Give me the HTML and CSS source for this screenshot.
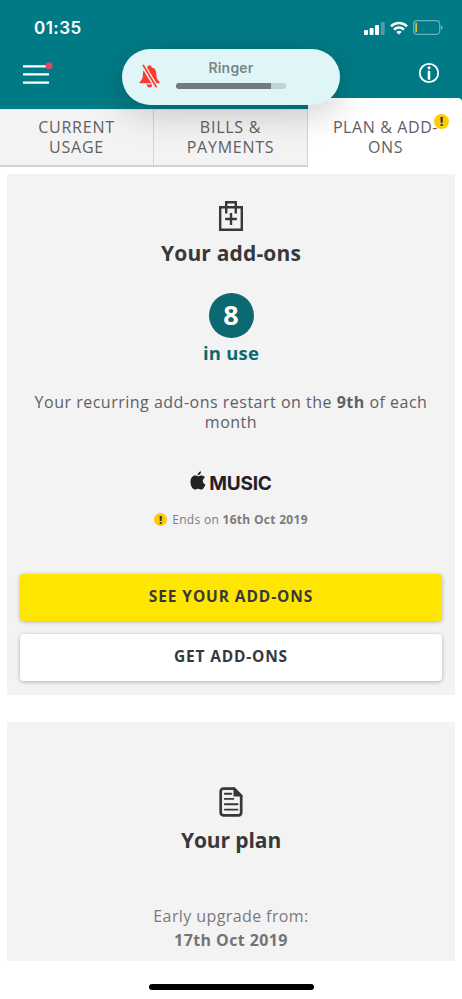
FILE: index.html
```html
<!DOCTYPE html>
<html lang="en">
<head>
<meta charset="utf-8">
<meta name="viewport" content="width=device-width">
<title>Plan &amp; add-ons</title>
<link rel="stylesheet" href="styles.css">
</head>
<body>
<header class="header">
  <div class="status">
    <span class="clock">01:35</span>
    <div class="status-icons">
      <svg width="21" height="14" viewBox="0 0 21 14" fill="#fff"><rect y="9" width="4" height="5" rx="1"/><rect x="5.6" y="7" width="4" height="7" rx="1"/><rect x="11" y="4" width="4" height="10" rx="1"/><rect x="16.7" y="1" width="4" height="13" rx="1" opacity=".28"/></svg>
      <svg width="18" height="14" viewBox="0 0 18 14" fill="none" stroke="#fff" stroke-width="2.5"><path d="M1 5.3a11.5 11.5 0 0 1 16 0M4 8.6a7.2 7.2 0 0 1 10 0"/><path d="M9 13.6 6.3 11a4 4 0 0 1 5.4 0z" fill="#fff" stroke="none"/></svg>
      <svg width="30" height="15" viewBox="0 0 30 15"><rect x=".7" y=".7" width="26" height="13.6" rx="3.5" fill="none" stroke="#fff" stroke-opacity=".42" stroke-width="1.2"/><rect x="2.3" y="3" width="1.8" height="9" rx=".7" fill="#e5c02e"/><path d="M28 5.2q3.2 2.3 0 4.6z" fill="#fff" opacity=".5"/></svg>
    </div>
  </div>
  <div class="nav">
    <svg width="30" height="24" viewBox="0 0 30 24"><path d="M0 5.3h26M0 13.3h26M0 21.7h26" stroke="#fff" stroke-width="2.3"/><circle cx="26" cy="4.7" r="3.5" fill="#db4861"/></svg>
    <svg width="22" height="22" viewBox="0 0 22 22"><circle cx="11" cy="11" r="9.2" fill="none" stroke="#fff" stroke-width="1.8"/><circle cx="11" cy="5.8" r="1.5" fill="#fff"/><path d="M11 9.8v6.8" stroke="#fff" stroke-width="2.6" stroke-linecap="round"/></svg>
  </div>
</header>
<nav class="tabs">
  <div class="tab">CURRENT<br>USAGE</div>
  <div class="tab">BILLS &amp;<br>PAYMENTS</div>
  <div class="tab active">PLAN &amp; ADD-<br>ONS<span class="alert tab-alert">!</span></div>
</nav>
<div class="ringer">
  <svg class="bell" width="22" height="26" viewBox="0 0 22 26"><path d="M10.5 1.5c1.3 0 2 .7 2.2 1.7 3.5 1 4.6 3.6 4.7 7 .1 3.8.6 5.3 2.8 7.2.9.8.6 1.8-.6 1.8H1.7c-1.2 0-1.5-1-.6-1.8 2.2-1.9 2.7-3.4 2.8-7.2.1-3.4 1.2-6 4.5-7 .1-1 .8-1.7 2.1-1.7zM7.7 20.5h5.6c-.2 1.9-1.2 2.9-2.8 2.9s-2.6-1-2.8-2.9z" fill="#ff3930"/><path d="m3.7.6 14 23.3" stroke="#dff5f7" stroke-width="4.4"/><path d="m4 .9 13.5 22.5" stroke="#ff3930" stroke-width="1.8"/></svg>
  <div class="ringer-body"><span>Ringer</span><div class="track"><div class="level"></div></div></div>
</div>
<main>
  <section class="card addons">
    <svg class="bag" width="26" height="32" viewBox="0 0 26 32" fill="none" stroke="#38383c" stroke-width="2.4"><path d="M2.2 7.3h21.6v22.4H2.2zM8.2 13.5V2.3h9.6v11.2M13 13v12M7.2 19h11.6"/></svg>
    <h2 class="title-addons">Your add-ons</h2>
    <div class="count">8</div>
    <div class="in-use">in use</div>
    <p class="restart">Your recurring add-ons restart on the <b>9th</b> of each<br>month</p>
    <div class="music"><svg width="16" height="20" viewBox="0 0 16 20" fill="#242023"><path d="M11.1.2c.1 2.2-1.700 4.200-3.500 4.100C7.400 2.400 9.200.400 11.100.2z"/><path d="M7.900 5.300c1 0 2-.8 3.500-.8 1.500 0 2.800.7 3.500 1.900-3.100 1.900-2.600 5.700.6 7-.9 2.300-2.400 5.100-4.300 5.100-1.300 0-1.700-.8-3.200-.8s-2 .8-3.200.8C2.500 18.500.5 14.500.5 11c0-4 2.300-6.400 4.600-6.400 1.100 0 2 .7 2.800.7z"/></svg><span>MUSIC</span></div>
    <div class="ends"><span class="alert">!</span><span>Ends on <b>16th Oct 2019</b></span></div>
    <div class="button primary"><span class="see">SEE YOUR ADD-ONS</span></div>
    <div class="button"><span class="get">GET ADD-ONS</span></div>
  </section>
  <section class="card plan">
    <svg width="24" height="30" viewBox="0 0 24 30" fill="none" stroke="#38383c" stroke-width="2.7"><path d="M4.500 1.700h10.700l7 7v16.800q0 2.800-2.800 2.800H4.500q-2.800 0-2.800-2.800V4.500q0-2.800 2.800-2.800z"/><path d="M15.200 1.700v7h7z" fill="#38383c" stroke-width="1.500"/><path d="M5.800 6.700h6.500M5.800 11.900h8.500M5.800 17.300h12.800M5.800 22.600h12.800" stroke-width="1.900" stroke-linecap="round"/></svg>
    <h2 class="title-plan">Your plan</h2>
    <p class="upgrade">Early upgrade from:</p>
    <p class="date">17th Oct 2019</p>
  </section>
</main>
<footer><div class="home"></div></footer>
</body>
</html>
```
FILE: styles.css
```css
*{box-sizing:border-box}
body{margin:0;width:462px;height:999px;overflow:hidden;background:#fff;color:#606064;font-family:"Open Sans","Noto Sans",sans-serif;position:relative}
svg{display:block;flex:none}
h2,p{margin:0;white-space:nowrap}
b{font-weight:700}
.header{height:109px;background:#007b85;padding:20px 22px 0}
.status{display:flex;justify-content:space-between;height:16px;align-items:center;padding-left:12px;margin-right:-4px}
.clock{font:600 17px Inter,sans-serif;color:#fff;letter-spacing:.45px}
.status-icons{display:flex;align-items:center;gap:5px;margin-right:1px;margin-top:-1px}
.nav{display:flex;justify-content:space-between;align-items:center;margin-top:25px;padding-left:1px}
.tabs{display:grid;grid-template-columns:154px 154px 154px;height:58px}
.tab{position:relative;background:#f3f3f3;border-right:1px solid #d6d3cd;border-bottom:2px solid #d6d3cd;border-top:1px solid #e4e4e4;padding-top:7px;text-align:center;font-size:16px;line-height:20px;letter-spacing:.75px}
.tab.active{background:#fff;border:0;margin-top:-11px;padding-top:19px;padding-left:1px;border-radius:0 4px 0 0;letter-spacing:.6px}
.alert{display:block;flex:none;width:13px;height:13px;border-radius:50%;background:#fc0;color:#38383c;font:800 11px/13px "Open Sans",sans-serif;text-align:center;letter-spacing:0}
.tab-alert{position:absolute;right:13px;top:16px;width:15px;height:15px;line-height:15px;font-size:12px}
.ringer{position:absolute;left:122px;top:49px;width:218px;height:56px;border-radius:28px;background:#dff5f7;box-shadow:0 8px 36px rgba(0,0,0,.2);display:flex;padding:15px 0 0 17px}
.ringer-body{width:110px;margin-left:15px;margin-top:-5px;text-align:center;font:600 14px/18px Inter,sans-serif;letter-spacing:.2px;color:#7c8487}
.track{height:6px;border-radius:3px;background:#bfd2d4;margin-top:6px;overflow:hidden}
.level{width:95px;height:6px;background:#73797c}
main{padding:7px 7px 0}
.card{background:#f3f3f3;display:flex;flex-direction:column;align-items:center}
.addons{height:521px;padding:26px 13px 0}
h2{color:#38383c;font-size:21px;line-height:30px;font-weight:700}
.title-addons{margin-top:6px;letter-spacing:.15px}
.count{width:45px;height:45px;border-radius:50%;background:#0d6970;color:#fff;font-weight:700;font-size:27px;line-height:43px;text-align:center;margin-top:25px}
.in-use{color:#0d6970;font-size:18.500px;font-weight:700;line-height:26px;margin-top:2px;letter-spacing:.2px}
.restart{font-size:16px;line-height:20px;text-align:center;margin-top:26px;letter-spacing:.5px}
.music{display:flex;gap:3px;margin-top:39px;height:21px;color:#242023;font:700 19px/23px Inter,sans-serif;letter-spacing:-.2px}
.music span{padding-top:1px}
.ends{display:flex;gap:5px;align-items:center;height:18px;margin-top:18px;font-size:12px;letter-spacing:.3px;color:#7b7b7e}
.button{width:422px;height:47px;flex:none;border-radius:4px;background:#fff;box-shadow:0 1px 4px rgba(0,0,0,.28);display:flex;align-items:center;justify-content:center;margin-top:13px;color:#38383c;font-size:15.500px;font-weight:700;padding-bottom:3px}
.see{letter-spacing:.9px}
.get{letter-spacing:.8px}
.button.primary{background:#ffe600;margin-top:46px}
.plan{height:239px;margin-top:27px;padding-top:65px}
.title-plan{margin-top:8px;letter-spacing:-.1px}
.upgrade{font-size:16px;line-height:22px;margin-top:50px;letter-spacing:.4px;color:#7a7a7d}
.date{font-size:16px;line-height:22px;font-weight:700;margin-top:2px;letter-spacing:.4px;color:#737376}
footer{height:38px;display:flex;justify-content:center;padding-top:23px}
.home{width:165px;height:6px;border-radius:3px;background:#000}
```
